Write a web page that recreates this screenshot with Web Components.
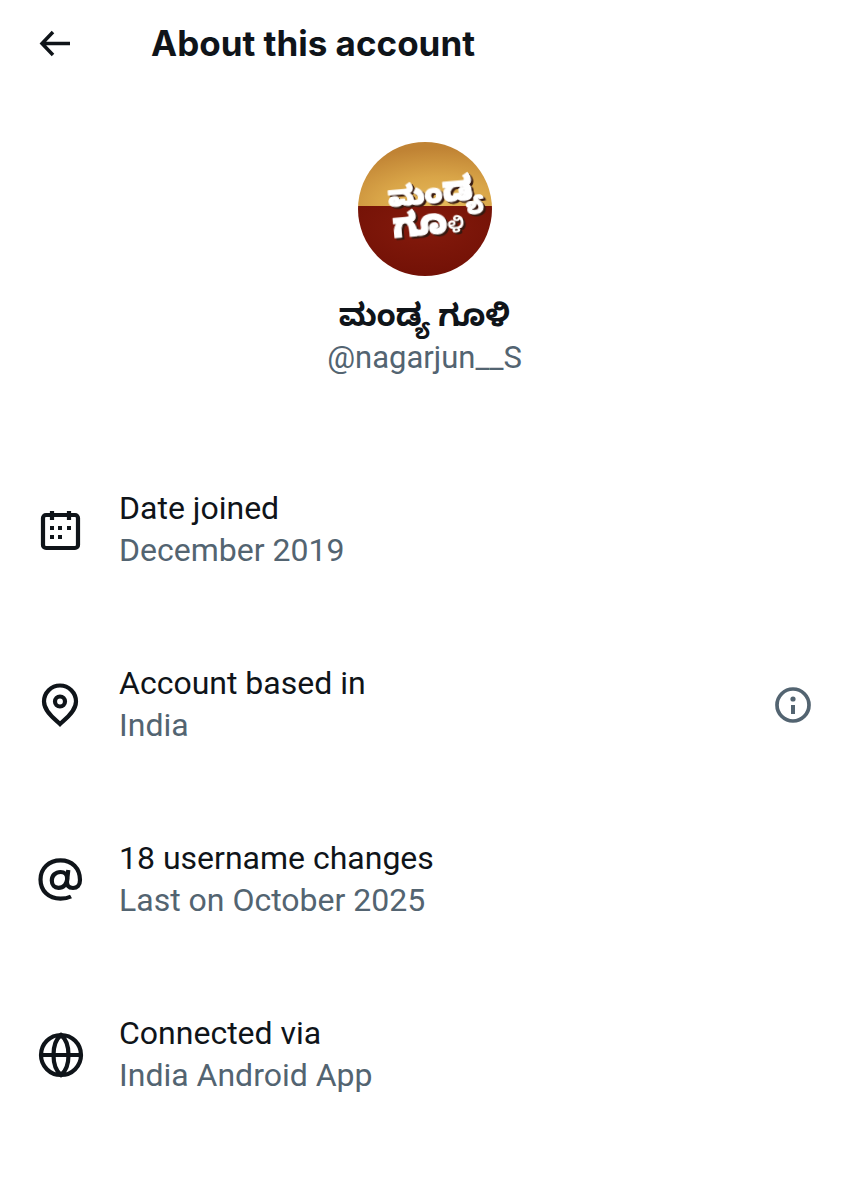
<!DOCTYPE html>
<html lang="en">
<head>
<meta charset="utf-8">
<meta name="viewport" content="width=device-width, initial-scale=1">
<title>About this account</title>
<style>
  body {
    margin: 0;
    background: #fff;
    color: #0f1419;
    --muted: #536471;
    font: 32px/42px Roboto, "Noto Sans", "Noto Sans Kannada", sans-serif;
  }
</style>
</head>
<body>
<about-page>
  <page-header slot="header">About this account</page-header>
  <profile-summary>
    <account-avatar slot="avatar"></account-avatar>
    <span slot="name" lang="kn">ಮಂಡ್ಯ ಗೂಳಿ</span>
    <span slot="handle">@nagarjun__S</span>
  </profile-summary>
  <info-list>
    <info-row icon="calendar">Date joined<span slot="value">December 2019</span></info-row>
    <info-row icon="pin" info>Account based in<span slot="value">India</span></info-row>
    <info-row icon="at">18 username changes<span slot="value">Last on October 2025</span></info-row>
    <info-row icon="globe">Connected via<span slot="value">India Android App</span></info-row>
  </info-list>
</about-page>

<script>
// Icon shapes on a 48 x 48 grid
const ICONS = {
  calendar: `
    <rect x="7" y="9" width="35" height="33" rx="3"/>
    <path d="M16 5v9M33 5v9"/>
    <path d="M14 22h4M22 22h4M31 22h4M14 31h4M22 31h4"/>`,
  pin: `
    <path d="M24 43C20 39 8 31 8 20.500a16 16 0 0 1 32 0C40 31 28 39 24 43z"/>
    <circle cx="24" cy="20.500" r="5"/>`,
  at: `
    <path d="M35 40.500C31.500 42.300 28 42.700 24.500 42.700C12.500 42.700 4.500 34.800 4.500 23.500S13 4.300 24.500 4.300S44 12 44 24C44 29.500 41 32 37 32C32.500 32 30.600 29.500 31 25L32.300 14"/>
    <path d="M31.200 22.500C31.200 18.500 28.500 16 24.500 16C19.500 16 15.800 19.500 15.800 24.500C15.800 29 18.500 31.800 22.500 31.800C27.500 31.800 31.200 28 31.200 22.500z"/>`,
  globe: `
    <circle cx="25" cy="24" r="20"/>
    <path d="M5 24h40"/>
    <path d="M25 4C20 8 17.500 15 17.500 24S20 40 25 44C30 40 32.500 33 32.500 24S30 8 25 4z"/>`
};

class AboutPage extends HTMLElement {
  constructor() {
    super();
    this.attachShadow({ mode: 'open' }).innerHTML = `
      <style>
        :host { display: block; }
      </style>
      <slot name="header"></slot>
      <main><slot></slot></main>
    `;
  }
}

class PageHeader extends HTMLElement {
  constructor() {
    super();
    this.attachShadow({ mode: 'open' }).innerHTML = `
      <style>
        :host { display: block; }
        header {
          display: flex;
          align-items: center;
          gap: 79px;
          height: 86px;
          padding: 0 38px;
        }
        button {
          display: flex;
          padding: 0;
          border: 0;
          background: none;
          color: inherit;
          cursor: pointer;
        }
        h1 {
          margin: 0;
          font-family: Inter, "Noto Sans", sans-serif;
          font-size: 35px;
          font-weight: 700;
        }
      </style>
      <header>
        <button type="button" aria-label="Back">
          <svg width="34" height="34" viewBox="0 0 34 34" fill="none" stroke="currentColor" stroke-width="3.500">
            <path d="M32 17.500H4M15 6L4 17.500L15 29"/>
          </svg>
        </button>
        <h1><slot></slot></h1>
      </header>
    `;
  }
}

class AccountAvatar extends HTMLElement {
  constructor() {
    super();
    this.attachShadow({ mode: 'open' }).innerHTML = `
      <style>
        :host { display: block; width: 134px; height: 134px; }
        svg { display: block; border-radius: 50%; }
        .lettering {
          font-family: "Noto Sans Kannada", "Noto Sans", sans-serif;
          font-weight: 900;
          fill: #fff;
          stroke: #fff;
          stroke-linejoin: round;
          filter: drop-shadow(2px 2px 0 #35180f);
        }
        .small { font-size: 22px; font-weight: 600; stroke: none; }
      </style>
      <svg width="134" height="134" viewBox="0 0 134 134" role="img" aria-label="Profile picture">
        <defs>
          <radialGradient id="gold" cx=".6" cy="1" r=".9">
            <stop offset="0" stop-color="#e6b95a"/>
            <stop offset=".5" stop-color="#d9a548"/>
            <stop offset="1" stop-color="#c08334"/>
          </radialGradient>
          <radialGradient id="red" cx=".5" cy=".3" r=".8">
            <stop offset="0" stop-color="#841a0c"/>
            <stop offset="1" stop-color="#701005"/>
          </radialGradient>
        </defs>
        <rect width="134" height="64" fill="url(#gold)"/>
        <rect y="64" width="134" height="70" fill="url(#red)"/>
        <g class="lettering" transform="rotate(-5 67 67)">
          <text x="31" y="62" font-size="28">ಮಂ<tspan font-size="34">ಡ್ಯ</tspan></text>
          <text x="33" y="93" font-size="34">ಗೂ<tspan class="small">ಳಿ</tspan></text>
        </g>
      </svg>
    `;
  }
}

class ProfileSummary extends HTMLElement {
  constructor() {
    super();
    this.attachShadow({ mode: 'open' }).innerHTML = `
      <style>
        :host { display: block; }
        section {
          display: flex;
          flex-direction: column;
          align-items: center;
          padding: 56px 38px 64px;
        }
        h2 {
          margin: 19px 0 0;
          font-size: 31px;
          font-weight: 700;
        }
        p { margin: 0; font-size: 31px; color: var(--muted); }
      </style>
      <section>
        <slot name="avatar"></slot>
        <h2><slot name="name"></slot></h2>
        <p><slot name="handle"></slot></p>
      </section>
    `;
  }
}

class InfoList extends HTMLElement {
  constructor() {
    super();
    this.attachShadow({ mode: 'open' }).innerHTML = `
      <style>
        :host { display: flex; flex-direction: column; }
      </style>
      <slot></slot>
    `;
  }
}

class InfoRow extends HTMLElement {
  connectedCallback() {
    const info = this.hasAttribute('info') ? `
      <button type="button" aria-label="More information">
        <svg width="36" height="36" viewBox="0 0 36 36">
          <circle cx="18" cy="18" r="16" fill="none" stroke="currentColor" stroke-width="3.700"/>
          <circle cx="18" cy="12" r="2.600" fill="currentColor"/>
          <path d="M18 18v9" stroke="currentColor" stroke-width="4"/>
        </svg>
      </button>` : '';

    this.attachShadow({ mode: 'open' }).innerHTML = `
      <style>
        :host {
          display: flex;
          align-items: center;
          gap: 35px;
          padding: 44px 38px 45px 36px;
        }
        .icon { flex: none; }
        .text { flex: 1; padding-bottom: 2px; }
        p { margin: 0; }
        .value { color: var(--muted); }
        button {
          display: flex;
          padding: 0;
          border: 0;
          background: none;
          color: var(--muted);
          cursor: pointer;
        }
      </style>
      <svg class="icon" width="48" height="48" viewBox="0 0 48 48" fill="none"
        stroke="currentColor" stroke-width="4.200" aria-hidden="true">${ICONS[this.getAttribute('icon')]}</svg>
      <div class="text">
        <p><slot></slot></p>
        <p class="value"><slot name="value"></slot></p>
      </div>
      ${info}
    `;
  }
}

customElements.define('about-page', AboutPage);
customElements.define('page-header', PageHeader);
customElements.define('account-avatar', AccountAvatar);
customElements.define('profile-summary', ProfileSummary);
customElements.define('info-list', InfoList);
customElements.define('info-row', InfoRow);
</script>
</body>
</html>
